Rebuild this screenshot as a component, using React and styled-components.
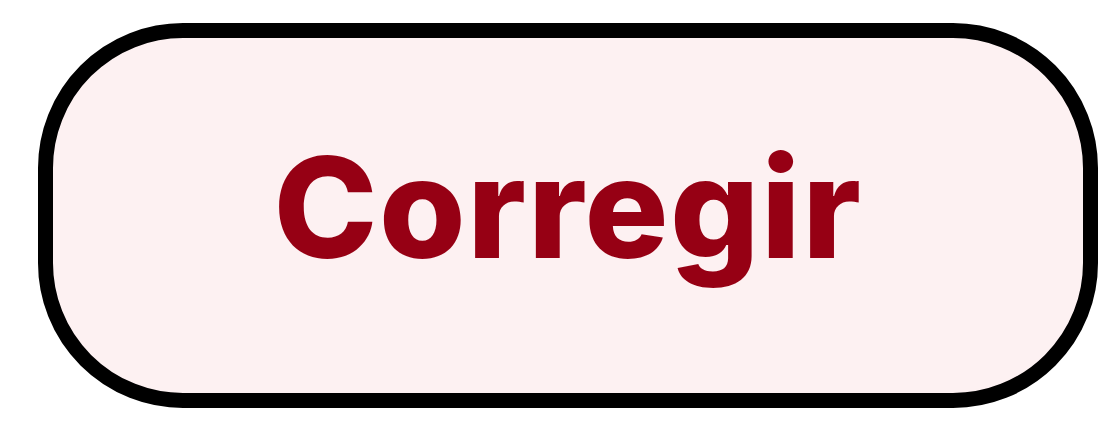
import styled, { createGlobalStyle } from "styled-components";

const Global = createGlobalStyle`
  html, body {
    margin: 0;
    padding: 0;
    background: #ffffff;
  }
`;

const Page = styled.div`
  width: 1120px;
  height: 447px;
  box-sizing: border-box;
  padding: 23px 22px 0 38px;
  display: flex;
  align-items: flex-start;
`;

const PillButton = styled.button`
  width: 1060px;
  height: 385px;
  box-sizing: border-box;
  border: 15px solid #000000;
  border-radius: 145px;
  background: #fdf1f2;
  color: #960014;
  font-family: "Inter", "Noto Sans", sans-serif;
  font-weight: 800;
  font-size: 140px;
  letter-spacing: 1.5px;
  line-height: 1;
  display: flex;
  align-items: center;
  justify-content: center;
  padding: 0 0 17px;
  cursor: pointer;
`;

export default function App() {
  return (
    <>
      <Global />
      <Page>
        <PillButton>Corregir</PillButton>
      </Page>
    </>
  );
}
